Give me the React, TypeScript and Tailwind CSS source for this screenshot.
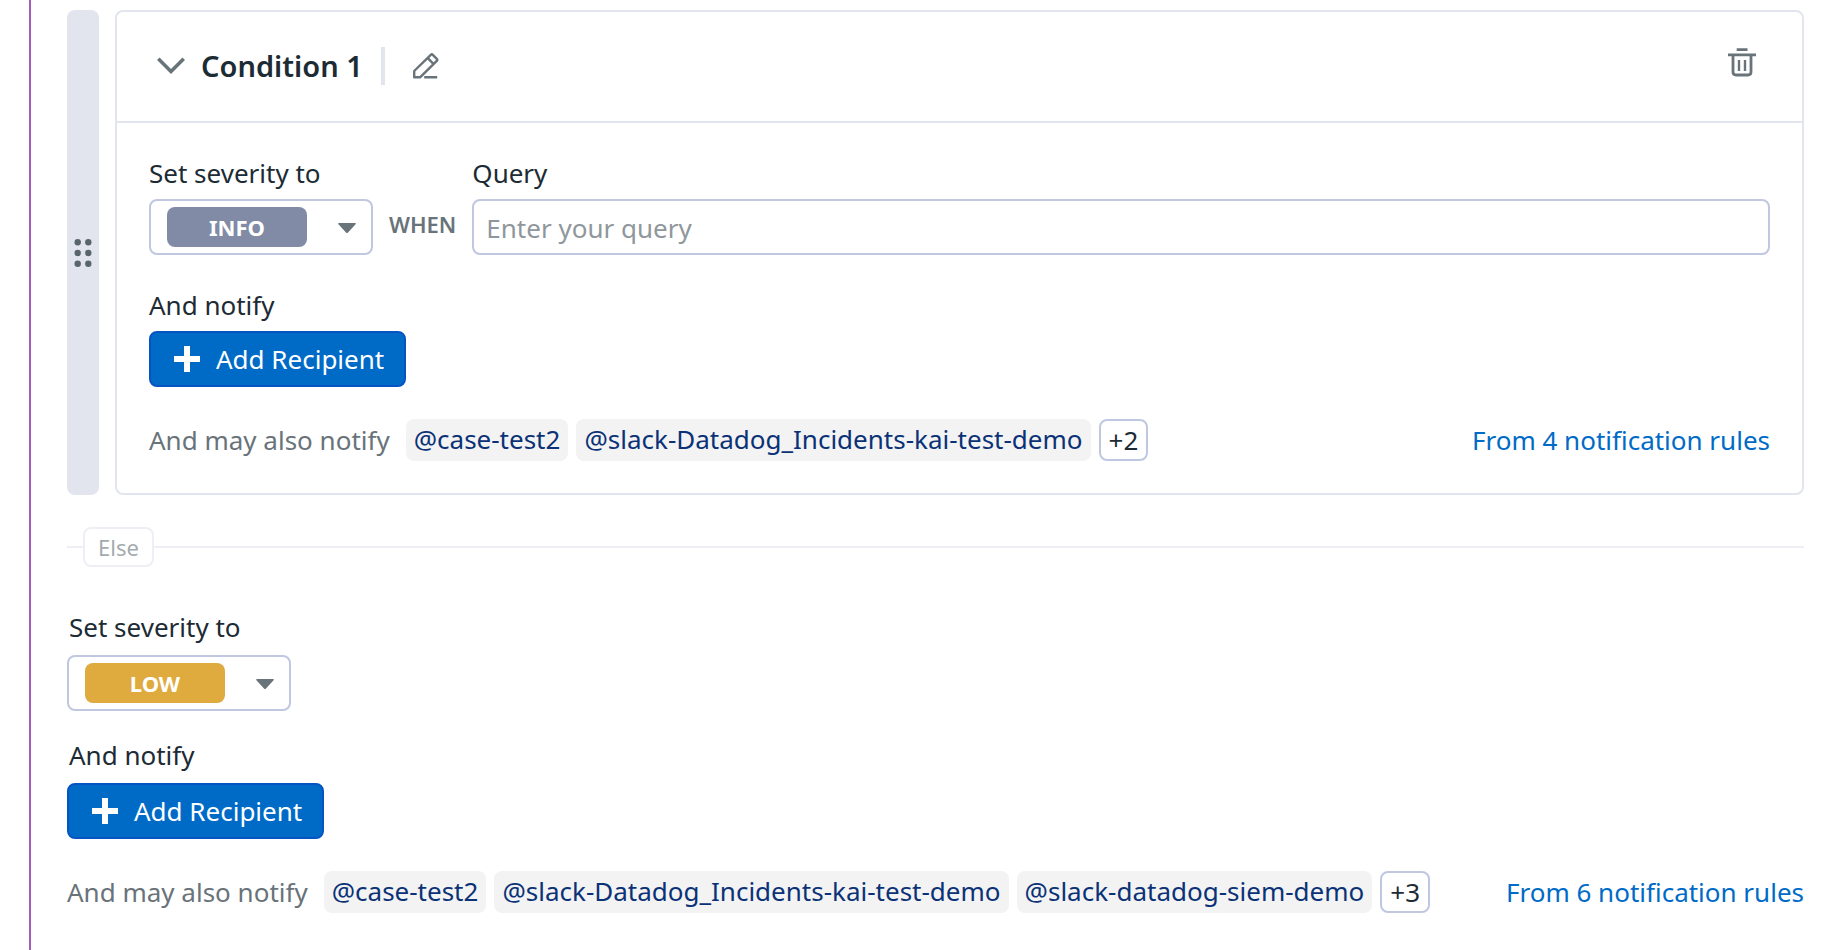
import { useState } from 'react';
import clsx from 'clsx';

const severities = [
  { value: 'info', label: 'INFO', color: 'bg-[#828ba6]' },
  { value: 'low', label: 'LOW', color: 'bg-[#dfaa3e]' },
  { value: 'medium', label: 'MEDIUM', color: 'bg-[#e5752d]' },
  { value: 'high', label: 'HIGH', color: 'bg-[#d33043]' },
];

function SeveritySelect({ id, initial }: { id: string; initial: string }) {
  const [value, setValue] = useState(initial);
  const current = severities.find((s) => s.value === value);

  return (
    <div className="flex h-14 w-56 items-center justify-between rounded-lg border-2 border-[#c0c7e0] bg-white pr-[15px] pl-4">
      <select
        id={id}
        value={value}
        onChange={(e) => setValue(e.target.value)}
        className={clsx(
          'h-10 w-[140px] appearance-none rounded-lg text-center text-[22px] leading-10 font-bold text-white',
          current?.color
        )}
      >
        {severities.map((s) => (
          <option key={s.value} value={s.value}>
            {s.label}
          </option>
        ))}
      </select>
      <svg width="18" height="12" viewBox="0 0 18 12" fill="#69737a" aria-hidden="true">
        <path d="M1 2h16q1.3 0 .6 1.2L10 11.4q-1 1.2-2 0L.4 3.2Q-.3 2 1 2Z" />
      </svg>
    </div>
  );
}

function AddRecipientButton() {
  return (
    <button
      type="button"
      className="flex h-14 items-center gap-4 self-start rounded-lg border-2 border-[#0653c4] bg-[#006bc7] pr-5 pl-[23px] text-[26px] leading-9 text-white"
    >
      <svg width="26" height="26" viewBox="0 0 26 26" stroke="currentColor" strokeWidth="6" aria-hidden="true">
        <path d="M13 0v26M0 13h26" />
      </svg>
      Add Recipient
    </button>
  );
}

type NotifyRowProps = {
  recipients: string[];
  more: number;
  rules: number;
};

function NotifyRow({ recipients, more, rules }: NotifyRowProps) {
  return (
    <div className="flex items-center gap-2 text-[26px] leading-[42px] whitespace-nowrap">
      <span className="mr-2 text-[#69737a]">And may also notify</span>
      {recipients.map((name) => (
        <span key={name} className="rounded-lg bg-[#f3f3f4] px-2 pb-0.5 leading-10 text-[#0b3276]">
          {name}
        </span>
      ))}
      <button
        type="button"
        className="h-[42px] rounded-lg border-2 border-[#c0c7e0] px-2 text-[26px] leading-9 text-[#1c2b34]"
      >
        +{more}
      </button>
      <a href="#rules" className="ml-auto text-[#006bc7]">
        From {rules} notification rules
      </a>
    </div>
  );
}

export default function App() {
  return (
    <div className="min-h-screen bg-white pl-[29px] font-['Noto_Sans',sans-serif] text-[26px] leading-9 text-[#1c2b34]">
      <main className="min-h-screen border-l-2 border-[#a35bc0] pt-2.5 pr-8 pb-9 pl-9">
        {/* Condition card with its drag handle */}
        <section className="flex gap-4">
          <div className="flex w-8 items-center justify-center rounded-lg bg-[#e2e5ee]">
            <svg width="18" height="28" viewBox="0 0 18 28" fill="#59656d" aria-hidden="true">
              <circle cx="3.7" cy="3.3" r="3.2" />
              <circle cx="14.3" cy="3.3" r="3.2" />
              <circle cx="3.7" cy="14" r="3.2" />
              <circle cx="14.3" cy="14" r="3.2" />
              <circle cx="3.7" cy="24.7" r="3.2" />
              <circle cx="14.3" cy="24.7" r="3.2" />
            </svg>
          </div>

          <div className="flex-1 rounded-lg border-2 border-[#e2e5ee]">
            <header className="flex items-center border-b-2 border-[#e2e5ee] pt-[35px] pr-[46px] pb-9 pl-10">
              <button type="button" aria-label="Collapse condition" className="mr-4">
                <svg width="28" height="18" viewBox="0 0 28 18" fill="none" stroke="#69737a" strokeWidth="3.6">
                  <path d="M1.3 1.7 14 14.4 26.7 1.7" />
                </svg>
              </button>
              <h2 className="text-[29px] leading-[38px] font-semibold">Condition 1</h2>
              <div className="mr-7 ml-[18px] h-[38px] w-1 bg-[#e2e5ee]" />
              <button type="button" aria-label="Rename condition">
                <svg
                  width="26"
                  height="26"
                  viewBox="0 0 26 26"
                  fill="none"
                  stroke="#69737a"
                  strokeWidth="2.4"
                  strokeLinejoin="round"
                >
                  <path d="M1.2 24.2V18L17.8 1.9q1-1 2 0l4 4q1 1 0 2L7.3 24.2ZM14.8 5.2l5.6 5.6M11.2 24.2H24.2" />
                </svg>
              </button>
              <button type="button" aria-label="Delete condition" className="ml-auto self-start">
                <svg width="28" height="30" viewBox="0 0 28 30" fill="none" stroke="#69737a" strokeWidth="2.8">
                  <path d="M8.7 2.6h10.8M0 7.8h28M5 8v17q0 3 3 3h12q3 0 3-3V8" />
                  <path strokeWidth="2.4" d="M11 13v11M17 13v11" />
                </svg>
              </button>
            </header>

            <div className="flex flex-col gap-8 p-8">
              <div className="flex items-end gap-4">
                <div className="flex flex-col gap-2">
                  <label htmlFor="condition-severity">Set severity to</label>
                  <SeveritySelect id="condition-severity" initial="info" />
                </div>
                <span className="flex h-14 items-center pb-1.5 text-[22px] font-semibold text-[#69737a]">
                  WHEN
                </span>
                <div className="flex flex-1 flex-col gap-2">
                  <label htmlFor="condition-query">Query</label>
                  <input
                    id="condition-query"
                    type="text"
                    placeholder="Enter your query"
                    className="h-14 w-full rounded-lg border-2 border-[#c0c7e0] px-3 pt-0.5 placeholder:text-[#8f979c]"
                  />
                </div>
              </div>
              <div className="flex flex-col gap-2">
                <span>And notify</span>
                <AddRecipientButton />
              </div>
              <NotifyRow
                recipients={['@case-test2', '@slack-Datadog_Incidents-kai-test-demo']}
                more={2}
                rules={4}
              />
            </div>
          </div>
        </section>

        {/* Else divider */}
        <div className="mt-8 mb-[42px] flex items-center">
          <div className="h-0.5 w-4 bg-[#eeeff5]" />
          <span className="rounded-lg border-2 border-[#eeeff5] px-[13px] text-[22px] text-[#a4abae]">Else</span>
          <div className="h-0.5 flex-1 bg-[#eeeff5]" />
        </div>

        {/* Fallback case */}
        <section>
          <div className="mb-[26px] flex flex-col gap-2.5">
            <label htmlFor="else-severity" className="px-0.5">
              Set severity to
            </label>
            <SeveritySelect id="else-severity" initial="low" />
          </div>
          <div className="mb-8 flex flex-col gap-2.5">
            <span className="px-0.5">And notify</span>
            <AddRecipientButton />
          </div>
          <NotifyRow
            recipients={['@case-test2', '@slack-Datadog_Incidents-kai-test-demo', '@slack-datadog-siem-demo']}
            more={3}
            rules={6}
          />
        </section>
      </main>
    </div>
  );
}
